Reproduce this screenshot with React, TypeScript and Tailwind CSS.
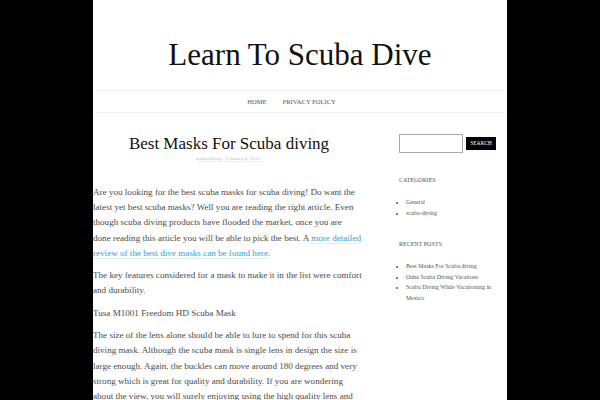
export default function App() {
  return (
    <div className="bg-black min-h-screen font-['Liberation_Serif',serif]">
      <div className="w-[414px] mx-auto bg-white min-h-screen overflow-hidden">
        {/* --- HEADER --- */}
        <header className="pt-[39px] pb-[20px] text-center">
          <h1 className="text-[31px] leading-[31px] text-[#111]">Learn To Scuba Dive</h1>
        </header>

        {/* --- NAV --- */}
        <nav className="mx-[2px] border-y border-[#f0f0f0] h-[23px] flex items-center justify-center gap-[16px] pr-[17px] text-[6.6px] uppercase text-[#555]">
          <a>Home</a>
          <a>Privacy Policy</a>
        </nav>

        <div className="flex pt-[20px]">
          {/* --- POST --- */}
          <main className="w-[272px] text-[9.1px] leading-[15.2px] text-[#4a4a4a] whitespace-nowrap">
            <h2 className="text-center text-[17px] leading-[22px] text-[#111]">Best Masks For Scuba diving</h2>
            <p className="text-center text-[5px] leading-[8px] text-[#bbb]">
              <span className="border-b border-[#eee]">scuba-diving / February 4, 2016 /</span>
            </p>
            <p className="mt-[22px]">
              Are you looking for the best scuba masks for scuba diving! Do want the<br />
              latest yet best scuba masks? Well you are reading the right article. Even<br />
              though scuba diving products have flooded the market, once you are<br />
              done reading this article you will be able to pick the best. A{" "}
              <a className="text-[#3a9ad9] border-b border-[#dcebf5]">more detailed</a>
              <br />
              <a className="text-[#3a9ad9] border-b border-[#dcebf5]">review of the best dive masks can be found here</a>.
            </p>
            <p className="mt-[7px]">
              The key features considered for a mask to make it in the list were comfort<br />
              and durability.
            </p>
            <p className="mt-[7.5px]">Tusa M1001 Freedom HD Scuba Mask</p>
            <p className="mt-[7px]">
              The size of the lens alone should be able to lure to spend for this scuba<br />
              diving mask. Although the scuba mask is single lens in design the size is<br />
              large enough. Again, the buckles can move around 180 degrees and very<br />
              strong which is great for quality and durability. If you are wondering<br />
              about the view, you will surely enjoying using the high quality lens and
            </p>
          </main>

          {/* --- SIDEBAR --- */}
          <aside className="ml-[34px] w-[100px] text-[#555]">
            <div className="flex items-center gap-[3px] mt-[1px]">
              <div className="w-[64px] h-[19px] border border-[#aaa]"></div>
              <div className="w-[30px] h-[13px] bg-black text-white text-[5.5px] flex items-center justify-center uppercase">
                Search
              </div>
            </div>
            <h3 className="mt-[23px] text-[6px] uppercase">Categories</h3>
            <ul className="mt-[12px] list-disc pl-[7px] text-[6px] leading-[11px]">
              <li>General</li>
              <li>scuba-diving</li>
            </ul>
            <h3 className="mt-[21px] text-[6px] uppercase">Recent Posts</h3>
            <ul className="mt-[12px] list-disc pl-[7px] text-[6px] leading-[10.7px]">
              <li>Best Masks For Scuba diving</li>
              <li>Oahu Scuba Diving Vacations</li>
              <li>Scuba Diving While Vacationing in Mexico</li>
            </ul>
          </aside>
        </div>
      </div>
    </div>
  );
}
